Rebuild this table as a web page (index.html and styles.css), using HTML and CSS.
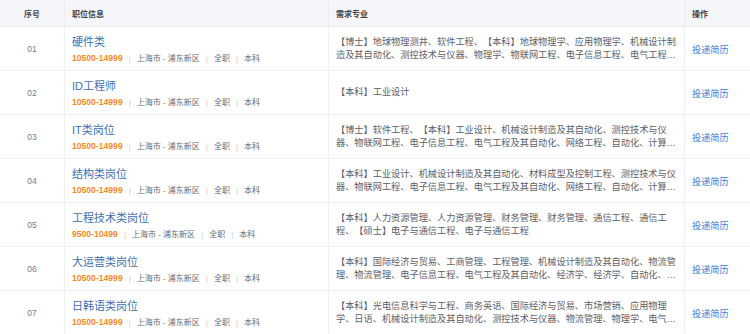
FILE: index.html
```html
<!DOCTYPE html>
<html lang="zh-CN">
<head>
<meta charset="utf-8">
<title>职位列表</title>
<link rel="stylesheet" href="styles.css">
</head>
<body>
<div class="jobs">
  <div class="row head">
    <div class="cell no">序号</div>
    <div class="cell">职位信息</div>
    <div class="cell">需求专业</div>
    <div class="cell">操作</div>
  </div>
  <div class="row">
    <div class="cell no">01</div>
    <div class="cell info"><div class="title">硬件类</div><div class="meta"><span class="salary">10500-14999</span><span class="sep">|</span>上海市 - 浦东新区<span class="sep">|</span>全职<span class="sep">|</span>本科</div></div>
    <div class="cell major"><div class="clamp">【博士】地球物理测井、软件工程、【本科】地球物理学、应用物理学、机械设计制<br>造及其自动化、测控技术与仪器、物理学、物联网工程、电子信息工程、电气工程及其自动化、自动化</div></div>
    <div class="cell op"><a class="apply">投递简历</a></div>
  </div>
  <div class="row">
    <div class="cell no">02</div>
    <div class="cell info"><div class="title">ID工程师</div><div class="meta"><span class="salary">10500-14999</span><span class="sep">|</span>上海市 - 浦东新区<span class="sep">|</span>全职<span class="sep">|</span>本科</div></div>
    <div class="cell major"><div class="clamp">【本科】工业设计</div></div>
    <div class="cell op"><a class="apply">投递简历</a></div>
  </div>
  <div class="row">
    <div class="cell no">03</div>
    <div class="cell info"><div class="title">IT类岗位</div><div class="meta"><span class="salary">10500-14999</span><span class="sep">|</span>上海市 - 浦东新区<span class="sep">|</span>全职<span class="sep">|</span>本科</div></div>
    <div class="cell major"><div class="clamp">【博士】软件工程、【本科】工业设计、机械设计制造及其自动化、测控技术与仪器、物联网工程、电子信息工程、电气工程及其自动化、网络工程、自动化、计算机科学与技术</div></div>
    <div class="cell op"><a class="apply">投递简历</a></div>
  </div>
  <div class="row">
    <div class="cell no">04</div>
    <div class="cell info"><div class="title">结构类岗位</div><div class="meta"><span class="salary">10500-14999</span><span class="sep">|</span>上海市 - 浦东新区<span class="sep">|</span>全职<span class="sep">|</span>本科</div></div>
    <div class="cell major"><div class="clamp">【本科】工业设计、机械设计制造及其自动化、材料成型及控制工程、测控技术与仪器、物联网工程、电子信息工程、电气工程及其自动化、网络工程、自动化、计算机科学与技术</div></div>
    <div class="cell op"><a class="apply">投递简历</a></div>
  </div>
  <div class="row">
    <div class="cell no">05</div>
    <div class="cell info"><div class="title">工程技术类岗位</div><div class="meta"><span class="salary">9500-10499</span><span class="sep">|</span>上海市 - 浦东新区<span class="sep">|</span>全职<span class="sep">|</span>本科</div></div>
    <div class="cell major"><div class="clamp">【本科】人力资源管理、人力资源管理、财务管理、财务管理、通信工程、通信工程、【硕士】电子与通信工程、电子与通信工程</div></div>
    <div class="cell op"><a class="apply">投递简历</a></div>
  </div>
  <div class="row">
    <div class="cell no">06</div>
    <div class="cell info"><div class="title">大运营类岗位</div><div class="meta"><span class="salary">10500-14999</span><span class="sep">|</span>上海市 - 浦东新区<span class="sep">|</span>全职<span class="sep">|</span>本科</div></div>
    <div class="cell major"><div class="clamp">【本科】国际经济与贸易、工商管理、工程管理、机械设计制造及其自动化、物流管理、物流管理、电子信息工程、电气工程及其自动化、经济学、经济学、自动化、自动化、计算机科学与技术</div></div>
    <div class="cell op"><a class="apply">投递简历</a></div>
  </div>
  <div class="row">
    <div class="cell no">07</div>
    <div class="cell info"><div class="title">日韩语类岗位</div><div class="meta"><span class="salary">10500-14999</span><span class="sep">|</span>上海市 - 浦东新区<span class="sep">|</span>全职<span class="sep">|</span>本科</div></div>
    <div class="cell major"><div class="clamp">【本科】光电信息科学与工程、商务英语、国际经济与贸易、市场营销、应用物理学、日语、机械设计制造及其自动化、测控技术与仪器、物流管理、物理学、电气工程及其自动化</div></div>
    <div class="cell op"><a class="apply">投递简历</a></div>
  </div>
</div>
</body>
</html>
```
FILE: styles.css
```css
html, body {
  margin: 0;
  padding: 0;
  background: #ffffff;
}
body {
  font-family: "Liberation Sans", "Noto Sans CJK SC", sans-serif;
  color: #5f6368;
  text-spacing: none;
  text-spacing-trim: space-all;
  font-feature-settings: "chws" 0, "halt" 0;
}
.jobs {
  width: 750px;
}
.row {
  display: grid;
  grid-template-columns: 64px 264px 356px 66px;
  height: 44px;
  box-sizing: border-box;
  border-bottom: 1px solid #edf0f5;
}
.cell {
  box-sizing: border-box;
  border-left: 1px solid #eef1f6;
  padding-left: 7px;
  display: flex;
  flex-direction: column;
  justify-content: center;
  min-width: 0;
}
.cell.no {
  border-left: none;
  padding-left: 0;
  align-items: center;
  font-size: 8.5px;
  color: #6e7c93;
}
.row.head {
  height: 27px;
  background: #f4f6f9;
  border-bottom: 1px solid #e9edf3;
}
.row.head .cell {
  font-size: 8px;
  font-weight: 700;
  color: #40454e;
  border-left-color: #eaedf2;
}
.cell.info {
  justify-content: flex-start;
  padding-top: 7px;
}
.title {
  font-size: 11px;
  line-height: 16px;
  color: #3e70b0;
  white-space: nowrap;
}
.meta {
  margin-top: 2px;
  font-size: 8px;
  line-height: 12px;
  color: #666b73;
  white-space: nowrap;
}
.salary {
  font-size: 8.6px;
  font-weight: 700;
  color: #f28a26;
}
.sep {
  display: inline-block;
  margin: 0 6px;
  color: #c5c9cf;
}
.cell.major {
  padding-right: 7px;
}
.clamp {
  font-size: 9.2px;
  line-height: 13px;
  color: #5d6168;
  display: -webkit-box;
  -webkit-box-orient: vertical;
  -webkit-line-clamp: 2;
  overflow: hidden;
}
.apply {
  font-size: 9.2px;
  color: #3e7bd2;
  white-space: nowrap;
  cursor: pointer;
}
```
